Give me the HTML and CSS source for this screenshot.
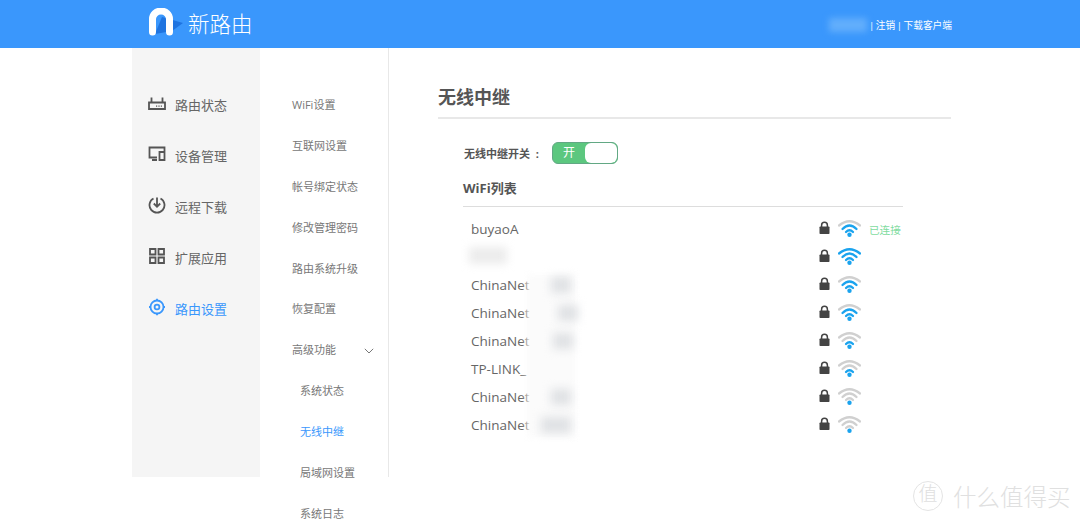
FILE: index.html
```html
<!DOCTYPE html>
<html lang="en">
<head>
    <meta charset="UTF-8">
    <meta name="viewport" content="width=device-width, initial-scale=1.0">
    <title>新路由</title>
    <link rel="stylesheet" href="styles.css">
</head>
<body>
    <svg class="defs" width="0" height="0">
        <symbol id="wifi" viewBox="0 0 23 18">
            <path class="arc arc-3" d="M1 6.500Q11.500 -2 22 6.500"/>
            <path class="arc arc-2" d="M4.500 10Q11.500 3 18.500 10"/>
            <path class="arc arc-1" d="M8 13Q11.500 9.500 15 13"/>
            <circle class="dot" cx="11.500" cy="15.800" r="2.200"/>
        </symbol>
        <symbol id="lock" viewBox="0 0 11 13">
            <path class="lock-shackle" d="M2.600 6V4.200a2.900 2.900 0 0 1 5.800 0V6"/>
            <rect class="lock-body" x="0.500" y="5.500" width="10" height="7.500" rx="0.800"/>
        </symbol>
    </svg>

    <div class="header">
        <div class="logo">
            <svg class="logo-mark" width="34" height="28" viewBox="0 0 34 28">
                <path class="logo-swoosh" d="M6 26L13 9L34 15L23 23Z"/>
                <path class="logo-arch" d="M3.500 24V11a8.500 8 0 0 1 17 0V24"/>
            </svg>
            <span class="logo-text">新路由</span>
        </div>
        <div class="user-links">
            <span class="user-name"></span>
            <span>| 注销 | 下载客户端</span>
        </div>
    </div>

    <div class="main">
        <div class="side-nav">
            <a href="#" class="side-item">
                <svg class="side-icon" viewBox="0 0 18 18"><path d="M1 8.500H17V15H1ZM3.500 8.500V3.500M14.500 8.500V3.500"/><path class="icon-dots" d="M8 12.200H9.200M10.400 12.200H11.600M12.800 12.200H14"/></svg>
                路由状态
            </a>
            <a href="#" class="side-item">
                <svg class="side-icon" viewBox="0 0 18 18"><path d="M9 12.500H1.500V2.500H16.500V6M4 15H9"/><path d="M11.500 7H16.500V15H11.500Z"/></svg>
                设备管理
            </a>
            <a href="#" class="side-item">
                <svg class="side-icon" viewBox="0 0 18 18"><path d="M5.500 2.500a7.500 7.500 0 1 0 7 0"/><path d="M9 1.500V10.500M5.800 7.500L9 10.800L12.200 7.500"/></svg>
                远程下载
            </a>
            <a href="#" class="side-item">
                <svg class="side-icon" viewBox="0 0 18 18"><path d="M2 2H7.500V7.500H2ZM10.500 2H16V7.500H10.500ZM2 10.500H7.500V16H2ZM10.500 10.500H16V16H10.500Z"/></svg>
                扩展应用
            </a>
            <a href="#" class="side-item active">
                <svg class="side-icon" viewBox="0 0 18 18"><circle cx="9" cy="9" r="6.500"/><circle class="icon-core" cx="9" cy="9" r="2.400"/><path d="M9 .8V2.500M9 15.500V17.200M1 9H2.500M15.500 9H17"/></svg>
                路由设置
            </a>
        </div>

        <div class="sub-nav">
            <a href="#" class="sub-item">WiFi设置</a>
            <a href="#" class="sub-item">互联网设置</a>
            <a href="#" class="sub-item">帐号绑定状态</a>
            <a href="#" class="sub-item">修改管理密码</a>
            <a href="#" class="sub-item">路由系统升级</a>
            <a href="#" class="sub-item">恢复配置</a>
            <a href="#" class="sub-item has-arrow">
                高级功能
                <svg class="arrow" width="10" height="6" viewBox="0 0 10 6"><path d="M.8 .8L5 5L9.200 .8"/></svg>
            </a>
            <a href="#" class="sub-item nested">系统状态</a>
            <a href="#" class="sub-item nested active">无线中继</a>
            <a href="#" class="sub-item nested">局域网设置</a>
            <a href="#" class="sub-item nested">系统日志</a>
        </div>

        <div class="content">
            <h1 class="page-title">无线中继</h1>
            <div class="switch-row">
                <span class="switch-label">无线中继开关&nbsp;&nbsp;:</span>
                <div class="switch">
                    <span class="switch-on">开</span>
                    <span class="switch-knob"></span>
                </div>
            </div>
            <div class="wifi-panel">
                <h2 class="wifi-title">WiFi列表</h2>
                <div class="wifi-row">
                    <span class="wifi-name">buyaoA</span>
                    <svg class="lock"><use href="#lock"/></svg>
                    <svg class="wifi level-2"><use href="#wifi"/></svg>
                    <span class="wifi-state">已连接</span>
                </div>
                <div class="wifi-row">
                    <span class="wifi-name"></span>
                    <svg class="lock"><use href="#lock"/></svg>
                    <svg class="wifi level-3"><use href="#wifi"/></svg>
                </div>
                <div class="wifi-row">
                    <span class="wifi-name">ChinaNet</span>
                    <svg class="lock"><use href="#lock"/></svg>
                    <svg class="wifi level-2"><use href="#wifi"/></svg>
                </div>
                <div class="wifi-row">
                    <span class="wifi-name">ChinaNet</span>
                    <svg class="lock"><use href="#lock"/></svg>
                    <svg class="wifi level-2"><use href="#wifi"/></svg>
                </div>
                <div class="wifi-row">
                    <span class="wifi-name">ChinaNet</span>
                    <svg class="lock"><use href="#lock"/></svg>
                    <svg class="wifi level-1"><use href="#wifi"/></svg>
                </div>
                <div class="wifi-row">
                    <span class="wifi-name">TP-LINK_</span>
                    <svg class="lock"><use href="#lock"/></svg>
                    <svg class="wifi level-1"><use href="#wifi"/></svg>
                </div>
                <div class="wifi-row">
                    <span class="wifi-name">ChinaNet</span>
                    <svg class="lock"><use href="#lock"/></svg>
                    <svg class="wifi"><use href="#wifi"/></svg>
                </div>
                <div class="wifi-row">
                    <span class="wifi-name">ChinaNet</span>
                    <svg class="lock"><use href="#lock"/></svg>
                    <svg class="wifi"><use href="#wifi"/></svg>
                </div>

                <!-- blurred out network names -->
                <div class="smudge smudge-row"></div>
                <div class="smudge smudge-names"></div>
                <div class="smudge smudge-spot spot-a"></div>
                <div class="smudge smudge-spot spot-b"></div>
                <div class="smudge smudge-spot spot-c"></div>
                <div class="smudge smudge-spot spot-d"></div>
                <div class="smudge smudge-spot spot-e"></div>
            </div>
        </div>
    </div>

    <div class="watermark">
        <span class="watermark-mark">值</span>
        <span>什么值得买</span>
    </div>
</body>
</html>
```

FILE: styles.css
```css
body {
    margin: 0;
    height: 521px;
    overflow: hidden;
    position: relative;
    background-color: white;
    color: #666;
    font-family: "Open Sans", "Noto Sans CJK SC", sans-serif;
}
a {
    color: inherit;
    text-decoration: none;
}
.defs {
    position: absolute;
}

/* Header */
.header {
    height: 48px;
    background-color: #3a97fc;
    color: white;
    display: flex;
    justify-content: space-between;
    align-items: center;
    padding: 0 128px 0 149px;
}
.logo {
    display: flex;
    align-items: center;
    gap: 5px;
}
.logo-mark {
    margin-top: -4px;
}
.logo-arch {
    fill: none;
    stroke: white;
    stroke-width: 7;
    stroke-linecap: round;
}
.logo-swoosh {
    fill: #1f74e0;
}
.logo-text {
    font-size: 21.500px;
    font-weight: 300;
    line-height: 28px;
}
.user-links {
    display: flex;
    align-items: center;
    gap: 2px;
    font-size: 9.700px;
    word-spacing: -1px;
    margin-top: 1px;
}
.user-name {
    width: 38px;
    height: 14px;
    background-color: #62aefc;
    filter: blur(3px);
}

/* Navigation */
.main {
    display: flex;
    height: 429px;
    margin-left: 132px;
}
.side-nav {
    width: 128px;
    box-sizing: border-box;
    padding-top: 31px;
    background-color: #f5f5f5;
}
.side-item {
    height: 51px;
    display: flex;
    align-items: center;
    gap: 9px;
    padding-left: 16px;
    font-size: 13px;
}
.side-item.active {
    color: #3a97fc;
}
.side-icon {
    width: 18px;
    height: 18px;
    margin-top: -3px;
    fill: none;
    stroke: #555;
    stroke-width: 1.800;
}
.side-item.active .side-icon {
    stroke: #3a97fc;
}
.icon-dots {
    stroke-width: 1.200;
}
.sub-nav {
    width: 129px;
    box-sizing: border-box;
    padding-top: 37px;
    border-right: 1px solid #e8e8e8;
    flex-shrink: 0;
}
.sub-item {
    display: block;
    height: 40.900px;
    line-height: 40.900px;
    padding-left: 32px;
    font-size: 11px;
    color: #777;
}
.sub-item.nested {
    padding-left: 40px;
}
.sub-item.active {
    color: #3a97fc;
}
.has-arrow {
    display: flex;
    align-items: center;
    justify-content: space-between;
    padding-right: 14px;
}
.arrow {
    fill: none;
    stroke: #777;
    stroke-width: 1;
}

/* Content */
.content {
    padding: 35px 0 0 49px;
    width: 513px;
}
.page-title {
    margin: 0;
    height: 34px;
    line-height: 28px;
    font-size: 18px;
    font-weight: bold;
    color: #555;
    border-bottom: 2px solid #e8e8e8;
}
.switch-row {
    display: flex;
    align-items: center;
    margin: 23px 0 0 26px;
    height: 22px;
}
.switch-label {
    width: 88px;
    font-size: 11px;
    font-weight: bold;
    color: #555;
}
.switch {
    width: 66px;
    height: 22px;
    box-sizing: border-box;
    display: flex;
    background-color: #5cc77f;
    border: 1px solid #62a884;
    border-radius: 6px;
    overflow: hidden;
}
.switch-on {
    width: 32px;
    color: white;
    font-size: 12px;
    line-height: 20px;
    text-align: center;
}
.switch-knob {
    flex: 1;
    background-color: white;
    border-radius: 6px;
}
.wifi-panel {
    position: relative;
    width: 440px;
    margin: 14px 0 0 25px;
}
.wifi-title {
    margin: 0 0 8px;
    height: 28px;
    line-height: 20px;
    font-size: 13px;
    font-weight: bold;
    color: #555;
    border-bottom: 1px solid #ddd;
}
.wifi-row {
    display: grid;
    grid-template-columns: 340px 11px 23px 33px;
    column-gap: 8px;
    align-items: center;
    height: 28px;
    padding-left: 8px;
}
.wifi-name {
    font-size: 13.500px;
    color: #666;
}
.lock {
    width: 11px;
    height: 13px;
    margin-top: -3px;
}
.lock-body {
    fill: #444;
}
.lock-shackle {
    fill: none;
    stroke: #444;
    stroke-width: 1.500;
}
.wifi {
    width: 23px;
    height: 18px;
    margin-top: -3px;
}
.wifi-state {
    font-size: 10.600px;
    color: #7fdc9f;
    white-space: nowrap;
}
/* colours go through variables so they reach inside <use> */
.arc {
    fill: none;
    stroke-width: 2.300;
    stroke-linecap: round;
}
.arc-1 {
    stroke: var(--arc-1, #d0d0d0);
}
.arc-2 {
    stroke: var(--arc-2, #d0d0d0);
}
.arc-3 {
    stroke: var(--arc-3, #d0d0d0);
}
.dot {
    fill: #1aa3ee;
}
.level-1 {
    --arc-1: #1aa3ee;
}
.level-2 {
    --arc-1: #1aa3ee;
    --arc-2: #1aa3ee;
}
.level-3 {
    --arc-1: #1aa3ee;
    --arc-2: #1aa3ee;
    --arc-3: #1aa3ee;
}
.smudge {
    position: absolute;
}
.smudge-row {
    left: 6px;
    top: 69px;
    width: 38px;
    height: 17px;
    background-color: #ececec;
    filter: blur(4px);
}
.smudge-names {
    left: 64px;
    top: 97px;
    width: 48px;
    height: 162px;
    background-color: #fbfbfb;
    filter: blur(3px);
}
.smudge-spot {
    background-color: #dfe1e4;
    filter: blur(5px);
    width: 20px;
    height: 16px;
}
.spot-a {
    left: 88px;
    top: 99px;
}
.spot-b {
    left: 95px;
    top: 127px;
}
.spot-c {
    left: 90px;
    top: 155px;
}
.spot-d {
    left: 88px;
    top: 211px;
}
.spot-e {
    left: 78px;
    top: 239px;
    width: 30px;
}

/* Watermark */
.watermark {
    position: absolute;
    left: 913px;
    top: 479px;
    display: flex;
    align-items: center;
    gap: 10px;
    font-size: 23.500px;
    color: #e0e0e0;
    font-weight: 300;
}
.watermark-mark {
    width: 30px;
    height: 30px;
    box-sizing: border-box;
    border: 1.500px solid #e4e4e4;
    border-radius: 50%;
    font-size: 19px;
    line-height: 25px;
    text-align: center;
}
```
